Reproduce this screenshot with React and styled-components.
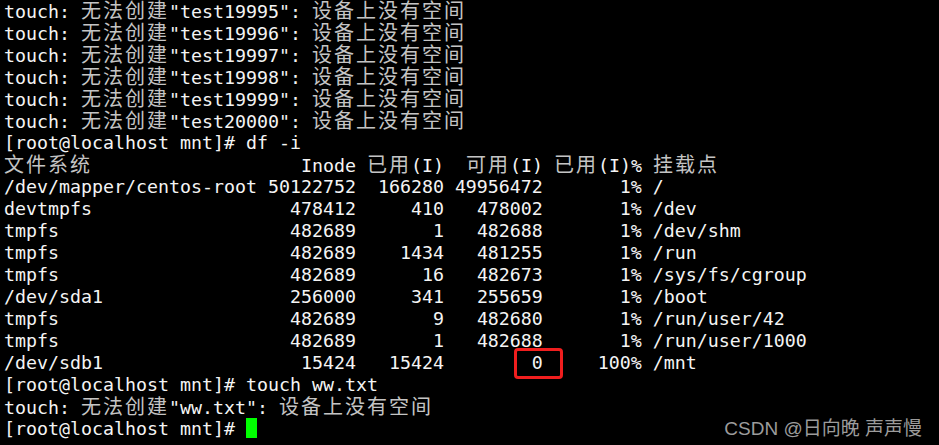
import styled, { createGlobalStyle } from 'styled-components';

const GlobalStyle = createGlobalStyle`
  html, body {
    margin: 0;
    padding: 0;
    background: #000;
  }
`;

const Screen = styled.div`
  position: relative;
  width: 939px;
  height: 445px;
  overflow: hidden;
  background: #000;
`;

const Terminal = styled.div`
  padding: 0 0 0 4px;
  font-family: "DejaVu Sans Mono", "Noto Sans CJK SC", monospace;
  font-size: 18.27px;
  color: #f4f4f4;
`;

const Line = styled.div`
  height: 22px;
  line-height: 22px;
  white-space: pre;
`;

const Cjk = styled.span`
  font-size: 20px;
  line-height: 22px;
  letter-spacing: 2px;
  color: #c4c4c4;
`;

const Marked = styled.span`
  position: relative;

  &::after {
    content: '';
    position: absolute;
    left: -18px;
    right: -20px;
    top: -4px;
    bottom: -6px;
    border: 3px solid #f01e1e;
    border-radius: 4px;
  }
`;

const Cursor = styled.span`
  display: inline-block;
  width: 11px;
  height: 20px;
  vertical-align: top;
  background: #00ff00;
`;

const Watermark = styled.div`
  position: absolute;
  right: 17px;
  bottom: 5px;
  font-family: "Liberation Sans", "Noto Sans CJK SC", sans-serif;
  font-size: 19px;
  color: #9c9c9c;
  white-space: pre;
`;

const errors = ['19995', '19996', '19997', '19998', '19999', '20000'];

const rows = [
  ['/dev/mapper/centos-root', '50122752', '166280', '49956472', '1%', '/'],
  ['devtmpfs', '478412', '410', '478002', '1%', '/dev'],
  ['tmpfs', '482689', '1', '482688', '1%', '/dev/shm'],
  ['tmpfs', '482689', '1434', '481255', '1%', '/run'],
  ['tmpfs', '482689', '16', '482673', '1%', '/sys/fs/cgroup'],
  ['/dev/sda1', '256000', '341', '255659', '1%', '/boot'],
  ['tmpfs', '482689', '9', '482680', '1%', '/run/user/42'],
  ['tmpfs', '482689', '1', '482688', '1%', '/run/user/1000'],
  ['/dev/sdb1', '15424', '15424', '0', '100%', '/mnt', true],
];

const Error = ({ name }) => (
  <Line>
    touch: <Cjk>无法创建</Cjk>"{name}": <Cjk>设备上没有空间</Cjk>
  </Line>
);

const Row = ({ row }) => {
  const [fs, inodes, used, free, pct, mount, marked] = row;
  const head = fs.padEnd(23) + ' ' + inodes.padStart(8) + ' ' + used.padStart(7) + ' ';
  const tail = ' ' + pct.padStart(8) + ' ' + mount;
  return (
    <Line>
      {head}
      {' '.repeat(8 - free.length)}
      {marked ? <Marked>{free}</Marked> : free}
      {tail}
    </Line>
  );
};

export default function App() {
  return (
    <Screen>
      <GlobalStyle />
      <Terminal>
        {errors.map(n => (
          <Error key={n} name={'test' + n} />
        ))}
        <Line>[root@localhost mnt]# df -i</Line>
        <Line>
          <Cjk>文件系统</Cjk>{' '.repeat(19)}Inode <Cjk>已用</Cjk>(I)  <Cjk>可用</Cjk>(I) <Cjk>已用</Cjk>(I)% <Cjk>挂载点</Cjk>
        </Line>
        {rows.map((r, i) => (
          <Row key={i} row={r} />
        ))}
        <Line>[root@localhost mnt]# touch ww.txt</Line>
        <Error name="ww.txt" />
        <Line>
          [root@localhost mnt]# <Cursor />
        </Line>
      </Terminal>
      <Watermark>CSDN @日向晚 声声慢</Watermark>
    </Screen>
  );
}
